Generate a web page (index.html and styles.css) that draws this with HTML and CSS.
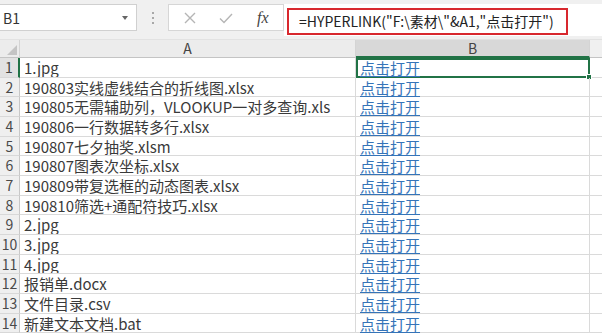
FILE: index.html
```html
<!DOCTYPE html>
<html lang="zh">
<head>
<meta charset="utf-8">
<link rel="stylesheet" href="styles.css">
</head>
<body>
<div class="app">
  <div class="toolbar">
    <div class="namebox"><span class="ref">B1</span><span class="caret"></span></div>
    <div class="sep"><i></i><i></i><i></i></div>
    <div class="fxbox">
      <svg class="ico" width="14" height="14" viewBox="0 0 14 14"><path d="M2 2 L12 12 M12 2 L2 12" stroke="#b5b5b5" stroke-width="1.4" fill="none"/></svg>
      <svg class="ico" width="16" height="14" viewBox="0 0 16 14"><path d="M2 7.5 L6 11.5 L14 3" stroke="#b5b5b5" stroke-width="1.4" fill="none"/></svg>
      <span class="fx">fx</span>
    </div>
    <div class="formula"><div class="hl">=HYPERLINK("F:\素材\"&amp;A1,"点击打开")</div></div>
  </div>
  <div class="sheet">
    <div class="corner"><span class="tri"></span></div>
    <div class="colh">A</div>
    <div class="colh sel">B</div>
    <div class="colh rest"></div>

    <div class="rowh rsel">1</div><div class="cell">1.jpg</div><div class="cell link active"><span>点击打开</span><i class="handle"></i></div><div class="cell rest"></div>
    <div class="rowh">2</div><div class="cell">190803实线虚线结合的折线图.xlsx</div><div class="cell link"><span>点击打开</span></div><div class="cell rest"></div>
    <div class="rowh">3</div><div class="cell">190805无需辅助列，VLOOKUP一对多查询.xls</div><div class="cell link"><span>点击打开</span></div><div class="cell rest"></div>
    <div class="rowh">4</div><div class="cell">190806一行数据转多行.xlsx</div><div class="cell link"><span>点击打开</span></div><div class="cell rest"></div>
    <div class="rowh">5</div><div class="cell">190807七夕抽奖.xlsm</div><div class="cell link"><span>点击打开</span></div><div class="cell rest"></div>
    <div class="rowh">6</div><div class="cell">190807图表次坐标.xlsx</div><div class="cell link"><span>点击打开</span></div><div class="cell rest"></div>
    <div class="rowh">7</div><div class="cell">190809带复选框的动态图表.xlsx</div><div class="cell link"><span>点击打开</span></div><div class="cell rest"></div>
    <div class="rowh">8</div><div class="cell">190810筛选+通配符技巧.xlsx</div><div class="cell link"><span>点击打开</span></div><div class="cell rest"></div>
    <div class="rowh">9</div><div class="cell">2.jpg</div><div class="cell link"><span>点击打开</span></div><div class="cell rest"></div>
    <div class="rowh">10</div><div class="cell">3.jpg</div><div class="cell link"><span>点击打开</span></div><div class="cell rest"></div>
    <div class="rowh">11</div><div class="cell">4.jpg</div><div class="cell link"><span>点击打开</span></div><div class="cell rest"></div>
    <div class="rowh">12</div><div class="cell">报销单.docx</div><div class="cell link"><span>点击打开</span></div><div class="cell rest"></div>
    <div class="rowh">13</div><div class="cell">文件目录.csv</div><div class="cell link"><span>点击打开</span></div><div class="cell rest"></div>
    <div class="rowh">14</div><div class="cell">新建文本文档.bat</div><div class="cell link"><span>点击打开</span></div><div class="cell rest"></div>
  </div>
</div>
</body>
</html>
```
FILE: styles.css
```css
* { box-sizing: border-box; }
html, body { margin: 0; padding: 0; }
body {
  width: 602px;
  height: 334px;
  overflow: hidden;
  background: #ffffff;
  font-family: "Noto Sans CJK SC", sans-serif;
}
.app { width: 602px; }
.toolbar {
  height: 40px;
  background: #f0f0f0;
  display: flex;
  align-items: flex-start;
  padding-top: 4px;
  border-bottom: 1px solid #e2e2e2;
}
.namebox {
  width: 137px;
  height: 27px;
  background: #fff;
  border: 1px solid #d0d0d0;
  border-left: none;
  display: flex;
  align-items: center;
  justify-content: space-between;
  padding: 0 8px 0 3px;
}
.ref { font-size: 14px; color: #333; }
.caret {
  width: 0; height: 0;
  border-left: 3px solid transparent;
  border-right: 3px solid transparent;
  border-top: 4px solid #666;
}
.sep {
  width: 31px;
  height: 27px;
  display: flex;
  flex-direction: column;
  align-items: center;
  justify-content: center;
  gap: 3px;
}
.sep i { width: 2px; height: 2px; background: #a8a8a8; display: block; }
.fxbox {
  width: 116px;
  height: 27px;
  background: #fff;
  border: 1px solid #d6d6d6;
  display: flex;
  align-items: center;
  padding-left: 14px;
  gap: 21px;
}
.fx {
  font-family: "Liberation Serif", serif;
  font-style: italic;
  font-size: 16px;
  color: #444;
  margin-left: 2px;
}
.formula {
  flex: 1;
  height: 32px;
  background: #fff;
  padding: 4px 0 0 3px;
}
.hl {
  width: 281px;
  height: 27px;
  border: 2px solid #d8282e;
  font-size: 14px;
  line-height: 22px;
  padding-left: 10px;
  color: #222;
  white-space: nowrap;
}
.sheet {
  display: grid;
  grid-template-columns: 20px 336px 234px 12px;
  grid-template-rows: 18px repeat(14, 19.67px);
  background: #fff;
}
.corner {
  background: #ececec;
  border-right: 1px solid #d4d4d4;
  border-bottom: 1px solid #c4c4c4;
  position: relative;
}
.tri {
  position: absolute;
  right: 2px;
  bottom: 2px;
  width: 0; height: 0;
  border-left: 10px solid transparent;
  border-bottom: 10px solid #c4c4c4;
}
.colh {
  background: #ececec;
  border-right: 1px solid #d4d4d4;
  border-bottom: 1px solid #c4c4c4;
  text-align: center;
  font-size: 14px;
  line-height: 17px;
  color: #444;
}
.colh.sel {
  background: #d8d8d8;
  border-bottom: 2px solid #217346;
  color: #444;
}
.colh.rest { background: #f0f0f0; border-right: none; }
.rowh {
  background: #efefef;
  border-right: 1px solid #c8c8c8;
  border-bottom: 1px solid #d8d8d8;
  text-align: center;
  font-size: 14px;
  line-height: 19px;
  color: #4a4a4a;
}
.rowh.rsel { background: #e2e2e2; border-right: 2px solid #217346; color: #444; }
.cell {
  border-right: 1px solid #dadada;
  border-bottom: 1px solid #dadada;
  font-size: 15px;
  line-height: 19px;
  color: #3a3a3a;
  padding-left: 4px;
  white-space: nowrap;
  overflow: hidden;
}
.cell.rest { border-right: none; }
.cell.link { color: #3574b8; position: relative; overflow: visible; }
.cell.link span { text-decoration: underline; text-underline-offset: 2px; }
.cell.active { border: 2px solid #217346; padding-left: 2px; line-height: 16px; }
.handle {
  position: absolute;
  right: -4px;
  bottom: -4px;
  width: 6px;
  height: 6px;
  background: #217346;
  border: 1px solid #fff;
}
```
